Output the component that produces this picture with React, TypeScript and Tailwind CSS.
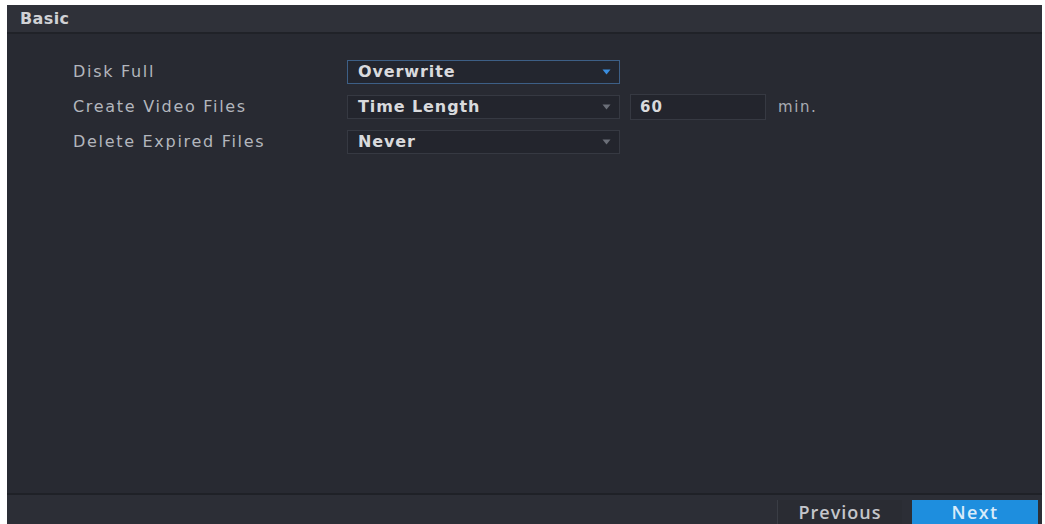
import React from "react";

const wide = { fontFamily: '"DejaVu Sans", "Noto Sans", sans-serif' };

function Caret({ active }: { active?: boolean }) {
  return (
    <svg width="9" height="6" viewBox="0 0 9 6" className="shrink-0">
      <path d="M0.5 0.5 H8.5 L4.5 5.5 Z" fill={active ? "#3a8ee0" : "#6b6f78"} />
    </svg>
  );
}

function Select({ value, active }: { value: string; active?: boolean }) {
  return (
    <div
      className={`flex h-[24px] w-[273px] items-center justify-between border pl-[10px] pr-[8px] ${
        active ? "border-[#3d5f86] bg-[#23262f]" : "border-[#363942] bg-[#23252d]"
      }`}
    >
      <span style={wide} className="text-[16px] leading-[20px] font-bold tracking-[0.9px] text-[#d9dadd]">
        {value}
      </span>
      <Caret active={active} />
    </div>
  );
}

function Label({ children }: { children: React.ReactNode }) {
  return (
    <span style={wide} className="w-[274px] text-[16px] leading-[20px] tracking-[1.7px] text-[#b3b6bd]">
      {children}
    </span>
  );
}

export default function App() {
  return (
    <div
      className="h-[524px] w-[1045px] bg-white pl-[7px] pr-[3px] pt-[5px]"
      style={{ fontFamily: '"Open Sans", "Noto Sans", sans-serif' }}
    >
      <div className="flex h-[519px] flex-col bg-[#282a32]">
        <div className="flex h-[29px] items-center border-b-2 border-[#202228] bg-[#2f3139] px-[13px]">
          <span style={wide} className="text-[16px] font-bold tracking-[0.4px] text-[#d0d1d5]">
            Basic
          </span>
        </div>

        <div className="flex flex-1 flex-col gap-[11px] pl-[66px] pt-[26px]">
          <div className="flex h-[24px] items-center">
            <Label>Disk Full</Label>
            <Select value="Overwrite" active />
          </div>
          <div className="flex h-[24px] items-center">
            <Label>Create Video Files</Label>
            <Select value="Time Length" />
            <div className="ml-[10px] flex h-[26px] w-[136px] items-center border border-[#363942] bg-[#23252d] pl-[9px]">
              <span style={wide} className="text-[15px] font-bold tracking-[1px] text-[#d9dadd]">
                60
              </span>
            </div>
            <span style={wide} className="ml-[12px] text-[15px] tracking-[1.6px] text-[#a9acb3]">
              min.
            </span>
          </div>
          <div className="flex h-[24px] items-center">
            <Label>Delete Expired Files</Label>
            <Select value="Never" />
          </div>
        </div>

        <div className="flex h-[31px] items-end justify-end gap-[10px] border-t-2 border-[#1f2127] bg-[#2c2e36] pr-[4px]">
          <button className="h-[24px] w-[125px] border-l border-[#3a3d45] bg-[#2a2c33] text-[18px] leading-[22px] font-semibold tracking-[1px] text-[#c4c6cb]">
            Previous
          </button>
          <button className="h-[24px] w-[126px] bg-[#1e8ede] text-[18px] leading-[22px] font-semibold tracking-[1.4px] text-[#d8ebf9]">
            Next
          </button>
        </div>
      </div>
    </div>
  );
}
